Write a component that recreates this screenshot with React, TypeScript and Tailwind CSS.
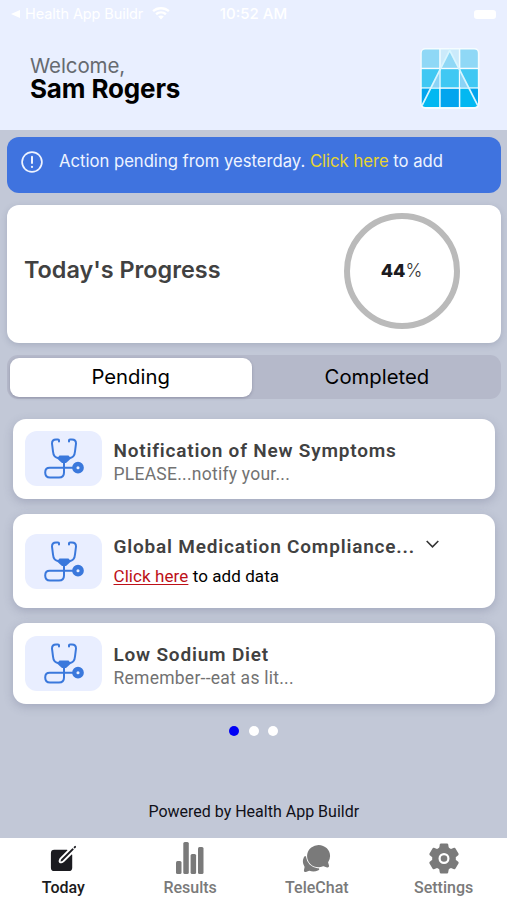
import type { ReactNode } from 'react';
import { IoChatbubbles, IoCreate } from 'react-icons/io5';

interface Task {
  title: string;
  note?: string;
  needsData?: boolean;
}

const tasks: Task[] = [
  { title: 'Notification of New Symptoms', note: 'PLEASE...notify your...' },
  { title: 'Global Medication Compliance...', needsData: true },
  { title: 'Low Sodium Diet', note: 'Remember--eat as lit...' },
];

function WifiIcon() {
  return (
    <svg width="18" height="14" viewBox="0 0 18 14" fill="white">
      <path d="M9 0C5.6 0 2.5 1.2.3 3.3l1.6 1.8C3.8 3.4 6.3 2.5 9 2.5s5.2.9 7.1 2.6l1.6-1.8C15.5 1.2 12.4 0 9 0Z" />
      <path d="M9 4.2c-2.2 0-4.2.8-5.7 2.2L5 8.2c1.1-1 2.5-1.6 4-1.6s2.9.6 4 1.6l1.7-1.8C13.2 5 11.2 4.2 9 4.2Z" />
      <path d="M9 8.4c-1.1 0-2.1.4-2.8 1.1L9 12.6l2.8-3.1C11.1 8.8 10.1 8.4 9 8.4Z" />
    </svg>
  );
}

function Logo() {
  return (
    <svg width="60" height="61" viewBox="0 0 60 62">
      <rect x="0" y="0" width="60" height="62" rx="5" fill="#f5fcff" />
      <path d="M5 1.5H19V20H1.3V5Q1.3 1.5 5 1.5Z" fill="#8fd8f6" />
      <path d="M20.5 1.5H39V20H20.5Z" fill="#cbeafb" />
      <path d="M40.5 1.5H54.5Q58.3 1.5 58.3 5V20H40.5Z" fill="#8fd8f6" />
      <path d="M1.3 21.5H19V40H1.3Z" fill="#40c8f3" />
      <path d="M20.5 21.5H39V40H20.5Z" fill="#40c8f3" />
      <path d="M40.5 21.5H58.3V40H40.5Z" fill="#40c8f3" />
      <path d="M1.3 41.5H19V60H5Q1.3 60 1.3 56.5Z" fill="#02b8f1" />
      <path d="M20.5 41.5H39V60H20.5Z" fill="#02a5ee" />
      <path d="M40.5 41.5H58.3V56.5Q58.3 60 54.5 60H40.5Z" fill="#02b8f1" />
      <path d="M29.7 3 38.5 20H21Z" fill="#8fd8f6" />
      <path d="M19 24.5V40H11.2ZM40.5 24.5V40H48.3Z" fill="#8bd3f6" />
      <path d="M1.5 41.5H10L1.5 57ZM58.3 41.5H49.5L58.3 57Z" fill="#02a5ee" />
      <path d="M1.5 58.5 29.7 2.5 58.3 58.5" fill="none" stroke="#d8f5ff" strokeWidth="1.8" />
    </svg>
  );
}

function Stethoscope() {
  return (
    <svg width="40" height="41" viewBox="0 0 40 41" fill="none" stroke="#3a78dc" strokeWidth="2" strokeLinecap="round">
      <path d="M15 3.5V2.3Q15 1.5 14 1.5H12Q8 1.5 8 5.5L9 13.5Q9.5 20 15 20H25Q30.5 20 31 13.5L32 5.5Q32 1.5 28 1.5H26Q25 1.5 25 2.3V3.5" />
      <path d="M15.5 17.5H24.5L27 20.5 22 25H18L13 20.5Z" fill="#3a78dc" stroke="none" />
      <path d="M20 24V34.5Q20 39.5 15 39.5H6Q1.2 39.5 1.2 34.5T6 29.7H29" />
      <circle cx="34" cy="29.7" r="3.7" strokeWidth="4.3" />
    </svg>
  );
}

function ResultsIcon() {
  return (
    <svg width="28" height="32" viewBox="0 0 28 32" fill="#7a7a7a">
      <rect x="0" y="19" width="5.5" height="13" rx="1.5" />
      <rect x="7.3" y="0" width="5.5" height="32" rx="1.5" />
      <rect x="14.6" y="12" width="5.5" height="20" rx="1.5" />
      <rect x="22" y="5" width="5.5" height="27" rx="1.5" />
    </svg>
  );
}

function GearIcon() {
  return (
    <svg width="30" height="31" viewBox="0 0 30 31" fill="#7a7a7a">
      <circle cx="15" cy="15.5" r="11.8" />
      {[0, 60, 120].map((angle) => (
        <path
          key={angle}
          transform={`rotate(${angle} 15 15.5)`}
          d="M12 .5H18Q19 .5 19.2 1.500L20 6V25L19.200 29.500Q19 30.500 18 30.500H12Q11 30.500 10.800 29.500L10 25V6L10.800 1.500Q11 .5 12 .5Z"
        />
      ))}
      <circle cx="15" cy="15.5" r="4.4" stroke="white" strokeWidth="2.2" />
    </svg>
  );
}

function TaskCard({ title, note, needsData }: Task) {
  return (
    <div
      className={`flex items-center rounded-[13px] bg-white pl-3 shadow-[0_3px_10px_rgba(75,80,115,0.25)] ${
        needsData ? 'h-[94px]' : 'h-[80.5px]'
      }`}
    >
      <div className="flex h-[55px] w-[77px] shrink-0 items-center justify-center rounded-[12px] bg-[#e9eeff]">
        <Stethoscope />
      </div>
      <div className={`ml-[11.5px] font-['Roboto',sans-serif] whitespace-nowrap ${needsData ? '' : 'pt-[7px]'}`}>
        <div className="flex h-6 items-center">
          <h3 className="text-[19px] leading-6 font-semibold tracking-[0.8px] text-[#414141]">{title}</h3>
          {needsData && (
            <svg className="mb-1.5 ml-[11px]" width="13" height="8" viewBox="0 0 13 8" fill="none" stroke="#333" strokeWidth="1.6">
              <path d="m.7 1 5.8 5.8L12.3 1" />
            </svg>
          )}
        </div>
        {needsData ? (
          <p className="mt-[5px] text-[17px] leading-6 tracking-[0.08px] text-black">
            <span className="text-[#bd1018] underline underline-offset-2">Click here</span> to add data
          </p>
        ) : (
          <p className="-mt-px text-[17.5px] leading-6 tracking-[0.25px] text-[#727272]">{note}</p>
        )}
      </div>
    </div>
  );
}

function Tab({ icon, label, active }: { icon: ReactNode; label: string; active?: boolean }) {
  return (
    <div className={`flex flex-1 flex-col items-center pt-[2px] ${active ? 'text-[#1b1b20]' : 'text-[#7a7a7a]'}`}>
      <div className="flex h-[37px] items-center justify-center">{icon}</div>
      <span className="text-[16px] leading-6 font-medium">{label}</span>
    </div>
  );
}

export default function App() {
  return (
    <div className="flex h-[900px] w-[507px] flex-col overflow-hidden bg-[#c2c8d7] font-['Inter',sans-serif]">
      <header className="h-[130px] shrink-0 bg-[#e9efff]">
        <div className="grid h-7 grid-cols-3 items-center px-[11px] text-[15px] leading-7 text-white">
          <div className="flex items-center whitespace-nowrap">
            <svg width="9" height="8" viewBox="0 0 9 8" fill="white">
              <path d="M0 4 9 0V8Z" />
            </svg>
            <span className="ml-[5px] w-[122px] text-[14.5px] tracking-[-0.1px]">Health App Buildr</span>
            <span className="ml-[5px]">
              <WifiIcon />
            </span>
          </div>
          <span className="text-center font-medium">10:52 AM</span>
          <span className="h-[9px] w-[22px] justify-self-end rounded-[3px] bg-white" />
        </div>
        <div className="flex items-start justify-between pt-5 pr-[27px] pl-[30px]">
          <div className="pt-1.5">
            <p className="text-[20.5px] leading-6 tracking-[-0.1px] text-[#666a70]">Welcome,</p>
            <h1 className="-mt-px text-[26px] leading-6 font-bold tracking-[-0.15px] text-black">Sam Rogers</h1>
          </div>
          <Logo />
        </div>
      </header>

      <main className="flex min-h-0 flex-1 flex-col pt-[6.5px] pr-[6.5px] pl-[7px]">
        <div className="flex h-[56px] shrink-0 items-start rounded-[12px] bg-[#3f73df] pt-[14px] pl-[14px] text-[16.65px] leading-6 text-[#eef3ff]">
          <svg width="22" height="22" viewBox="0 0 22 22" fill="none" stroke="#eef3ff" strokeWidth="1.7" strokeLinecap="round">
            <circle cx="11" cy="11" r="9.9" />
            <path d="M11 5.8V12" strokeWidth="2" />
            <path d="M11 15.8V16" strokeWidth="2.2" />
          </svg>
          <p className="ml-4 -mt-[2px] whitespace-nowrap">
            Action pending from yesterday. <span className="text-[#e8d42f]">Click here</span> to add
          </p>
        </div>

        <section className="mt-[12.5px] flex h-[138px] shrink-0 items-center justify-between rounded-[12px] bg-white pr-[41px] pb-[7px] pl-[17px] shadow-[0_2px_6px_rgba(75,80,115,0.22)]">
          <h2 className="-mt-0.5 text-[23.4px] leading-7 font-semibold text-[#414141]">Today's Progress</h2>
          <div className="flex h-[116px] w-[116px] items-center justify-center rounded-full border-[6px] border-[#bababa] text-[18px] text-[#333]">
            <span className="font-extrabold text-[#1b1b20]">44</span>
            <span className="font-light">%</span>
          </div>
        </section>

        <div className="mt-3 grid h-[44px] shrink-0 grid-cols-2 gap-1 rounded-[11px] bg-[#b5b9ca] p-[2.5px] text-[20.3px] text-black">
          <div className="flex items-center justify-center rounded-[9px] bg-white shadow-[0_1px_3px_rgba(60,60,90,0.3)]">Pending</div>
          <div className="flex items-center justify-center">Completed</div>
        </div>

        <div className="mt-[19.5px] flex flex-col gap-[15px] px-[6px]">
          {tasks.map((task) => (
            <TaskCard key={task.title} {...task} />
          ))}
        </div>

        <div className="mt-[22px] flex justify-center gap-[9.5px]">
          <span className="size-[10px] rounded-full bg-[#0000f5]" />
          <span className="size-[10px] rounded-full bg-white" />
          <span className="size-[10px] rounded-full bg-white" />
        </div>

        <p className="mt-auto mb-[14px] text-center font-['Roboto',sans-serif] text-[16px] leading-6 text-[#101018]">
          Powered by Health App Buildr
        </p>
      </main>

      <nav className="flex h-[62px] shrink-0 bg-white font-['Roboto',sans-serif]">
        <Tab icon={<IoCreate size={31} />} label="Today" active />
        <Tab icon={<ResultsIcon />} label="Results" />
        <Tab icon={<IoChatbubbles size={31} />} label="TeleChat" />
        <Tab icon={<GearIcon />} label="Settings" />
      </nav>
    </div>
  );
}
